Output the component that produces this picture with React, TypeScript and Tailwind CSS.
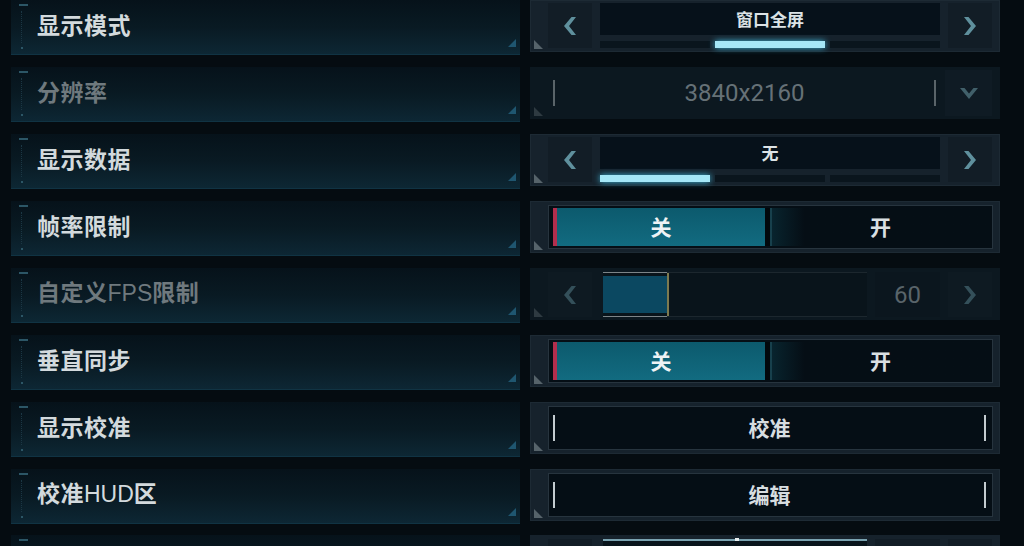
import React from "react";

type Row =
  | { label: string; disabled?: boolean; kind: "selector"; value: string; active: number }
  | { label: string; disabled?: boolean; kind: "dropdown"; value: string }
  | { label: string; disabled?: boolean; kind: "toggle" }
  | { label: string; disabled?: boolean; kind: "slider"; value: string; fill: number }
  | { label: string; disabled?: boolean; kind: "button"; value: string };

const rows: Row[] = [
  { label: "显示模式", kind: "selector", value: "窗口全屏", active: 1 },
  { label: "分辨率", disabled: true, kind: "dropdown", value: "3840x2160" },
  { label: "显示数据", kind: "selector", value: "无", active: 0 },
  { label: "帧率限制", kind: "toggle" },
  { label: "自定义FPS限制", disabled: true, kind: "slider", value: "60", fill: 64 },
  { label: "垂直同步", kind: "toggle" },
  { label: "显示校准", kind: "button", value: "校准" },
  { label: "校准HUD区", kind: "button", value: "编辑" },
];

function Chevron({ dir, dim }: { dir: "left" | "right"; dim?: boolean }) {
  return (
    <svg width="14" height="20" viewBox="0 0 14 20" className={dir === "right" ? "-scale-x-100" : ""}>
      <polygon points="13,1 8.5,1 1,10 8.5,19 13,19 6,10" fill={dim ? "#34505a" : "#5f909d"} />
    </svg>
  );
}

function Notch({ dim }: { dim?: boolean }) {
  return (
    <svg width="9" height="9" viewBox="0 0 9 9" className="absolute left-[4px] bottom-[3px]">
      <polygon points="0,0 9,9 0,9" fill={dim ? "#2e3a41" : "#56636a"} />
    </svg>
  );
}

// latin runs in the labels are set thinner than the CJK glyphs
function LabelText({ text }: { text: string }) {
  const parts = text.split(/([A-Za-z]+)/).filter(Boolean);
  return (
    <>
      {parts.map((p, i) =>
        /^[A-Za-z]+$/.test(p) ? (
          <span key={i} className="font-normal font-['Liberation_Sans',sans-serif] tracking-[0px]">
            {p}
          </span>
        ) : (
          <span key={i}>{p}</span>
        )
      )}
    </>
  );
}

function LabelBand({ text, disabled }: { text: string; disabled?: boolean }) {
  return (
    <div className="relative w-[509px] h-[55px] shrink-0 flex items-center pl-[26px] pb-[5px] bg-linear-to-b from-[#06121a] via-[#091a23] to-[#0d2734] border-b border-[#103343]">
      <div className="absolute left-[8px] top-[4px] w-[9px] h-[2px] bg-[#2c5666]" />
      <div className="absolute left-[10px] top-[11px] h-[32px] border-l border-dotted border-[#1b3744]" />
      <div className="absolute left-[10px] top-[47px] w-[2px] h-[2px] bg-[#2c5666]" />
      <svg width="8" height="8" viewBox="0 0 8 8" className="absolute right-[4px] bottom-[7px]">
        <polygon points="8,0 8,8 0,8" fill="#1f5670" />
      </svg>
      <span
        className={`text-[23px] leading-none font-bold tracking-[0.5px] ${
          disabled ? "text-[#6f797e]" : "text-[#d3dadd]"
        }`}
      >
        <LabelText text={text} />
      </span>
    </div>
  );
}

function Selector({ value, active }: { value: string; active: number }) {
  return (
    <div className="relative w-[470px] h-[52px] flex gap-[8px] pl-[18px] pr-[8px] pt-[3px] pb-[4px] bg-[#16222c] shadow-[inset_0_0_0_1px_#1d2a34]">
      <Notch />
      <div className="w-[44px] h-full bg-[#121d26] flex items-center justify-center">
        <Chevron dir="left" />
      </div>
      <div className="flex-1 flex flex-col">
        <div className="h-[32px] bg-[#06111a] flex items-center justify-center text-[17px] font-semibold text-[#dce3e6]">
          {value}
        </div>
        <div className="mt-[6px] h-[7px] flex gap-[5px]">
          {[0, 1, 2].map((i) => (
            <div
              key={i}
              className={
                i === active
                  ? "flex-1 bg-[#a5e7f7] shadow-[0_0_6px_#3fb8dc]"
                  : "flex-1 bg-[#0a151d]"
              }
            />
          ))}
        </div>
      </div>
      <div className="w-[44px] h-full bg-[#121d26] flex items-center justify-center">
        <Chevron dir="right" />
      </div>
    </div>
  );
}

function Dropdown({ value }: { value: string }) {
  return (
    <div className="relative w-[470px] h-[52px] flex items-center pl-[23px] pr-[8px] py-[3px] bg-[#0c1820]">
      <Notch dim />
      <div className="w-[2px] h-[26px] bg-[#5a6469]" />
      <div className="flex-1 text-center font-['Roboto',sans-serif] text-[24px] text-[#667177]">{value}</div>
      <div className="w-[2px] h-[26px] bg-[#5a6469]" />
      <div className="ml-[9px] w-[47px] h-full bg-[#0f1b24] flex items-center justify-center">
        <svg width="20" height="13" viewBox="0 0 20 13">
          <polygon points="1,1 5.5,1 10,6.5 14.5,1 19,1 10,12" fill="#41606a" />
        </svg>
      </div>
    </div>
  );
}

function Toggle() {
  return (
    <div className="relative w-[470px] h-[52px] flex pl-[18px] pr-[7px] py-[4px] bg-[#16222c] shadow-[inset_0_0_0_1px_#1d2a34]">
      <Notch />
      <div className="flex-1 flex border border-[#27343e] bg-[#050e15] pl-[4px] pr-[3px] py-[2px]">
        <div className="w-[212px] border-l-4 border-[#b22e4d] bg-linear-to-b from-[#0c5a6d] to-[#126b80] flex items-center justify-center text-[21px] font-bold text-[#eef3f5]">
          关
        </div>
        <div className="w-[5px] bg-[#02080c]" />
        <div className="w-[2px] bg-[#17404c]" />
        <div className="flex-1 bg-linear-to-r from-[#08242e] via-[#050e15] via-15% to-[#050e15] flex items-center justify-center text-[21px] font-bold text-[#d9dfe2]">
          开
        </div>
      </div>
    </div>
  );
}

function Slider({ value, fill, disabled }: { value: string; fill: number; disabled?: boolean }) {
  return (
    <div
      className={`relative w-[470px] h-[52px] flex pl-[18px] pr-[8px] pt-[4px] pb-[3px] ${
        disabled ? "bg-[#0c1820]" : "bg-[#16222c]"
      }`}
    >
      <Notch dim={disabled} />
      <div className={`w-[44px] h-full flex items-center justify-center ${disabled ? "bg-[#0e1a22]" : "bg-[#121d26]"}`}>
        <Chevron dir="left" dim={disabled} />
      </div>
      <div className="ml-[11px] w-[264px] h-full flex flex-col">
        <div className="h-px flex">
          <div className="bg-[#7c8589]" style={{ width: fill }} />
          <div className="flex-1 bg-[#1c272e]" />
        </div>
        <div className="flex-1 flex py-[3px] bg-[#09141b]">
          <div className="bg-[#0b4861]" style={{ width: fill }} />
          <div className="w-[2px] -my-[3px] bg-[#7d7a50]" />
        </div>
        <div className="h-px flex">
          <div className="bg-[#7c8589]" style={{ width: fill }} />
          <div className="flex-1 bg-[#1c272e]" />
        </div>
      </div>
      <div className={`ml-[8px] w-[65px] h-full flex items-center justify-center font-['Roboto',sans-serif] text-[24px] ${disabled ? "bg-[#0b161e] text-[#59646a]" : "bg-[#121d26] text-[#c9d1d4]"}`}>
        {value}
      </div>
      <div className={`ml-[8px] w-[44px] h-full flex items-center justify-center ${disabled ? "bg-[#0e1a22]" : "bg-[#121d26]"}`}>
        <Chevron dir="right" dim={disabled} />
      </div>
    </div>
  );
}

function ActiveSlider() {
  return (
    <div className="relative w-[470px] h-[52px] flex pl-[18px] pr-[8px] pt-[4px] pb-[3px] bg-[#16222c]">
      <div className="w-[44px] h-full bg-[#121d26]" />
      <div className="ml-[11px] w-[264px] h-full flex flex-col">
        <div className="h-[2px] bg-[#7aa3b1] flex">
          <div className="w-[132px]" />
          <div className="w-[4px] h-[4px] -mt-px bg-[#e8eef0]" />
        </div>
        <div className="flex-1 bg-[#09141b]" />
      </div>
      <div className="ml-[8px] w-[65px] h-full bg-[#121d26]" />
      <div className="ml-[8px] w-[44px] h-full bg-[#121d26]" />
    </div>
  );
}

function Button({ value }: { value: string }) {
  return (
    <div className="relative w-[470px] h-[52px] flex pl-[18px] pr-[7px] py-[4px] bg-[#16222c] shadow-[inset_0_0_0_1px_#1d2a34]">
      <Notch />
      <div className="flex-1 flex items-center border border-[#27343e] bg-[#050e15] pl-[4px] pr-[6px]">
        <div className="w-[2px] h-[26px] bg-[#c4ccd0]" />
        <div className="flex-1 text-center text-[21px] font-bold text-[#d7dde0]">{value}</div>
        <div className="w-[2px] h-[26px] bg-[#c4ccd0]" />
      </div>
    </div>
  );
}

function Control({ row }: { row: Row }) {
  switch (row.kind) {
    case "selector":
      return <Selector value={row.value} active={row.active} />;
    case "dropdown":
      return <Dropdown value={row.value} />;
    case "toggle":
      return <Toggle />;
    case "slider":
      return <Slider value={row.value} fill={row.fill} disabled={row.disabled} />;
    case "button":
      return <Button value={row.value} />;
  }
}

export default function App() {
  return (
    <div className="w-[1024px] h-[546px] overflow-hidden bg-[#050c11] font-['Noto_Sans_CJK_SC','Noto_Sans',sans-serif]">
      <div className="flex flex-col gap-[12px] pl-[11px]">
        {rows.map((row) => (
          <div key={row.label} className="flex gap-[10px] h-[55px]">
            <LabelBand text={row.label} disabled={row.disabled} />
            <Control row={row} />
          </div>
        ))}
        <div className="flex gap-[10px] h-[55px] -mt-px">
          <LabelBand text="" />
          <ActiveSlider />
        </div>
      </div>
    </div>
  );
}
